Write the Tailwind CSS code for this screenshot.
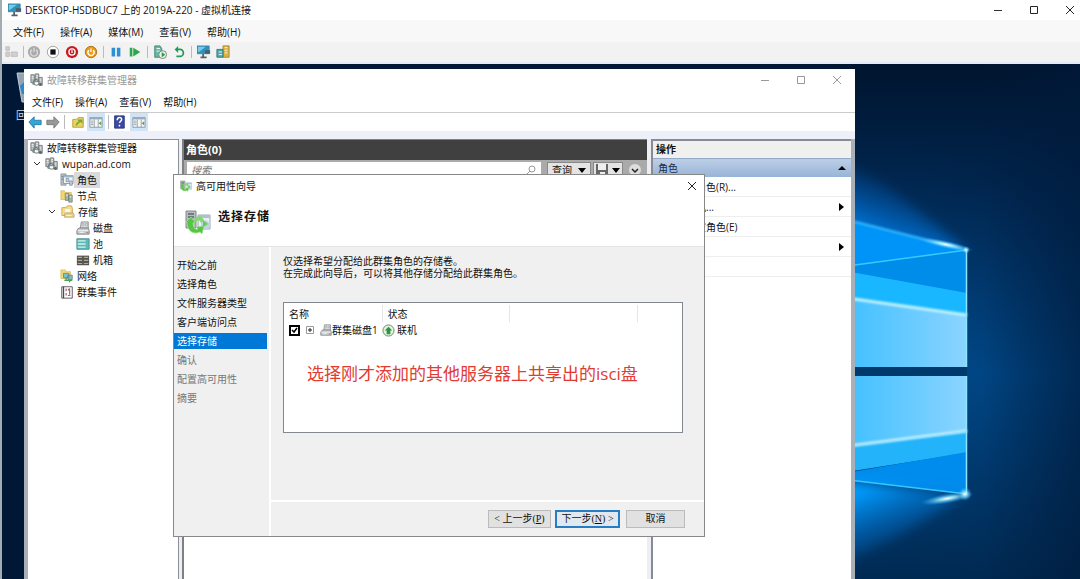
<!DOCTYPE html>
<html lang="zh-CN">
<head>
    <meta charset="utf-8">
    <meta name="viewport" content="width=device-width, initial-scale=1">
    <script src="https://cdn.jsdelivr.net/npm/@tailwindcss/browser@4"></script>
    <title>DESKTOP-HSDBUC7 上的 2019A-220 - 虚拟机连接</title>
</head>
<body class="flex h-screen flex-col overflow-hidden border-l-2 border-[#a3abb3] bg-white font-['Open_Sans','Noto_Sans_CJK_SC',sans-serif] text-[10px] leading-4 text-[#111]">
    <!-- Shared icons -->
    <svg class="hidden">
        <symbol id="cluster" viewBox="0 0 16 16">
            <path d="M1 2h4v9H1zM6 1h4v9H6zM10 5h4v9h-4z" fill="#b4babb" stroke="#737a7c"/>
            <path d="M2 4h2M2 6h2M7 3h2M7 5h2M11 7h2M11 9h2" stroke="#f2f4f4"/>
            <path d="M4 9l3-2 4 3M4 9v4l4 1 3-2" fill="none" stroke="#5c6c6c"/>
            <circle cx="4" cy="12" r="1.5" fill="#7f9190"/><circle cx="12" cy="13" r="1.5" fill="#566"/>
        </symbol>
        <symbol id="disk" viewBox="0 0 16 16">
            <path d="M6 1h8v7H5z" fill="#d8dadb" stroke="#8b8f91"/>
            <path d="M7 3h2v2H7zM11 3h2v2h-2z" fill="#f8f8f8" stroke="#888" stroke-width=".6"/>
            <path d="M3 8h11l1 3v4H1v-4z" fill="#c5c9cb" stroke="#7b8082"/>
            <path d="M2 11h12M4 13h5" stroke="#f8f8f8"/><path d="M12 13h2" stroke="#777"/>
        </symbol>
        <symbol id="wizard" viewBox="0 0 26 26">
            <path d="M1 2h10v17H1z" fill="#b7bcbf" stroke="#84898c"/>
            <path d="M3 5h6M3 8h6M3 11h4" stroke="#5d6468" stroke-width="1.5"/>
            <path d="M13 6h12v14H13z" fill="#e8eff5" stroke="#9aa9b5"/><path d="M13 6h12v3H13z" fill="#b1c0cd"/>
            <path d="M16 14l5-3 3 3v6h-8z" fill="#bcd3e2"/>
            <path d="M2 13c0 9 6 13 13 10l2 2 2-8-8 1 2 2c-3 1-5-1-5-6l2-1-4-5-5 5z" fill="#54c544" stroke="#a0e48e" stroke-width=".7"/>
            <path d="M9 11c4-6 9-4 10 1l-3 2c-1-3-3-4-5-1z" fill="#82da6d"/>
            <path d="M18 11l5 4-5 3z" fill="#6acb55"/>
        </symbol>
        <symbol id="monitor" viewBox="0 0 16 16">
            <path d="M0 1h14v9H0z" fill="#2e92bd" stroke="#3e7690" stroke-width=".7"/><path d="M1 2h9L2 8H1z" fill="#77cbe6"/>
            <path d="M9 6h6v4H9z" fill="#4c5e69"/><path d="M7 10v3M4 14h7" stroke="#54616a" stroke-width="2"/>
        </symbol>
        <symbol id="roles" viewBox="0 0 16 16">
            <path d="M1 1h6v13H1z" fill="#b5bcc3" stroke="#7c858b" stroke-width=".7"/><path d="M2 4h4M2 7h4" stroke="#65737b"/>
            <path d="M4 3h11v9H4z" fill="#f2f7fa" stroke="#8996a0"/><path d="M4 3h11v2H4z" fill="#9fb5c6"/>
            <path d="M7 6h3v4H7zM11 9h3v5h-3z" fill="#c5d1da" stroke="#70899b" stroke-width=".8"/>
        </symbol>
        <symbol id="nodes" viewBox="0 0 16 16">
            <path d="M1 2h4l1 2h7v8H1z" fill="#f3d66e" stroke="#c4a745" stroke-width=".6"/>
            <path d="M6 5h4v8H6zM10 7h4v8h-4z" fill="#a8b5ad" stroke="#637167" stroke-width=".7"/><path d="M7 7h2M11 9h2" stroke="#fff"/>
        </symbol>
        <symbol id="folder" viewBox="0 0 16 16">
            <path d="M1 3h5l1-2h5l1 3v8H1z" fill="#f7df85" stroke="#c9a640"/><path d="M4 4h7v5H4z" fill="#fff7d8" stroke="#d8c58a" stroke-width=".5"/>
            <path d="M5 9h9l1 2v3H4v-3z" fill="#e5cf8b" stroke="#a8976a" stroke-width=".7"/><path d="M6 12h6" stroke="#f7f7f7"/>
        </symbol>
        <symbol id="pool" viewBox="0 0 16 16">
            <path d="M1 2h14v12H1z" fill="#5eb9b8" stroke="#478d91"/><path d="M2 4.500h9M2 8h9M2 11.500h9" stroke="#cff3ee" stroke-width="1.500"/>
        </symbol>
        <symbol id="chassis" viewBox="0 0 16 16">
            <path d="M1 3h14v11H1z" fill="#55544d"/><path d="M2 5h5M9 5h5M2 8.500h5M9 8.500h5M2 12h5M9 12h5" stroke="#aaa99c" stroke-width="1.4"/>
        </symbol>
        <symbol id="network" viewBox="0 0 16 16">
            <path d="M1 1h5l1 2h5v8H1z" fill="#f4d874" stroke="#c4a84c" stroke-width=".6"/>
            <path d="M4 5h6v5H4zM9 7h5v5H9z" fill="#7ac2c8" stroke="#5e747a" stroke-width=".8"/><path d="M5 13h9M7 10v3M11 12v3" stroke="#4e9b56" stroke-width="1.5"/>
        </symbol>
        <symbol id="events" viewBox="0 0 16 16">
            <path d="M2 2h12v13H2z" fill="#fff" stroke="#54464f"/><path d="M4 2v13" stroke="#54464f" stroke-width="1.5"/>
            <path d="M7 4v3m0 2v3M11 4v7M9 6l2-2M9 12h3" stroke="#a36a74" stroke-width="1.4"/>
        </symbol>
        <symbol id="pane" viewBox="0 0 16 16">
            <path d="M1 3h14v11H1z" fill="#f6f8f8" stroke="#88949b"/><path d="M1 3h14v2H1z" fill="#9aabba"/>
            <path d="M6 5v9M2 7h3M2 9h3M2 11h3M10.500 5v9" stroke="#8f9ca3"/><path d="M14 7v5l-3-2.500z" fill="#5ba451"/>
        </symbol>
    </svg>

    <header class="flex h-5 shrink-0 items-center pl-1.5 pr-0.5">
        <svg class="size-[14px]"><use href="#monitor"/></svg>
        <h1 class="ml-[3px]">DESKTOP-HSDBUC7 上的 2019A-220 - 虚拟机连接</h1>
        <div class="ml-auto flex gap-[20px]">
            <button aria-label="最小化" class="flex size-4 items-center justify-center"><svg class="size-2.5" viewBox="0 0 10 10"><path d="M1 5.500h8" stroke="#333"/></svg></button>
            <button aria-label="最大化" class="flex size-4 items-center justify-center"><svg class="size-2.5" viewBox="0 0 10 10"><path d="M1.500 1.500h7v7h-7z" fill="none" stroke="#222"/></svg></button>
            <button aria-label="关闭" class="flex size-4 items-center justify-center"><svg class="size-2.5" viewBox="0 0 10 10"><path d="M1 1l8 8M9 1L1 9" stroke="#222"/></svg></button>
        </div>
    </header>
    <nav class="flex h-[22px] shrink-0 items-center gap-4 bg-[#f8f8f8] pl-[11px] pt-0.5">
        <button>文件(F)</button><button>操作(A)</button><button>媒体(M)</button><button>查看(V)</button><button>帮助(H)</button>
    </nav>
    <div class="flex h-[22px] shrink-0 items-center border-b-2 border-[#e4ebf6] bg-[#f2f2f2] pl-[3px]">
        <button aria-label="Ctrl+Alt+Del" class="mr-1"><svg class="size-[14px]" viewBox="0 0 16 16"><path d="M1 2h4v4H1zM1 8h4v5H1zM7 8h7v5H7z" fill="#d0d0d0" stroke="#bbb"/></svg></button>
        <span class="mr-[3px] h-3 w-px bg-[#bbb]"></span>
        <div class="flex gap-[5px]">
            <button aria-label="启动"><svg class="size-[14px]" viewBox="0 0 16 16"><circle cx="8" cy="8" r="7" fill="#aaa"/><path d="M5.500 5.500a4 4 0 1 0 5 0M8 3v5" fill="none" stroke="#ddd" stroke-width="1.500"/></svg></button>
            <button aria-label="关闭虚拟机"><svg class="size-[14px]" viewBox="0 0 16 16"><circle cx="8" cy="8" r="6.500" fill="#fff" stroke="#999"/><path d="M5 5h6v6H5z" fill="#111"/></svg></button>
            <button aria-label="关机"><svg class="size-[14px]" viewBox="0 0 16 16"><circle cx="8" cy="8" r="7" fill="#c8191f"/><circle cx="8" cy="8" r="3.500" fill="none" stroke="#fff" stroke-width="1.500"/><path d="M8 6v3" stroke="#fff" stroke-width="1.500"/></svg></button>
            <button aria-label="保存"><svg class="size-[14px]" viewBox="0 0 16 16"><circle cx="8" cy="8" r="6.500" fill="#ee9a19" stroke="#a96a13"/><path d="M5.500 6a3.500 3.500 0 1 0 5 0M8 4v4" fill="none" stroke="#fff" stroke-width="1.500"/></svg></button>
        </div>
        <span class="mx-[5px] h-3 w-px bg-[#bbb]"></span>
        <button aria-label="暂停" class="mr-[5px]"><svg class="size-[14px]" viewBox="0 0 16 16"><path d="M3 3h4v10H3zM9 3h4v10H9z" fill="#2f8fd3"/></svg></button>
        <button aria-label="重置"><svg class="size-[14px]" viewBox="0 0 16 16"><path d="M2 3h3v10H2zM6 3l8 5-8 5z" fill="#2ba84b"/></svg></button>
        <span class="mx-[5px] h-3 w-px bg-[#bbb]"></span>
        <button aria-label="检查点" class="mr-[5px]"><svg class="size-[14px]" viewBox="0 0 16 16"><path d="M2 1h6l2 3v10H2z" fill="#69b8a4" stroke="#467e70"/><path d="M4 4h4M4 7h4" stroke="#fff"/><circle cx="11" cy="11" r="4.500" fill="#eee" stroke="#777"/><path d="M10 8l4 3-4 3z" fill="#24a13f"/></svg></button>
        <button aria-label="还原"><svg class="size-[14px]" viewBox="0 0 16 16"><path d="M5 5h4a4 4 0 0 1 0 8H5" fill="none" stroke="#27965a" stroke-width="2"/><path d="M7 1v8L3 5z" fill="#27965a"/></svg></button>
        <span class="mx-[5px] h-3 w-px bg-[#bbb]"></span>
        <button aria-label="增强会话" class="mr-[5px]"><svg class="size-[14px]"><use href="#monitor"/></svg></button>
        <button aria-label="共享"><svg class="size-[14px]" viewBox="0 0 16 16"><path d="M8 1h7v13H8z" fill="#dbb33f" stroke="#a68736"/><path d="M1 5h7v9H1z" fill="#48a9a7" stroke="#387775"/><path d="M3 8h4M3 11h4M10 3h3M10 6h3M10 9h3" stroke="#fff"/></svg></button>
    </div>

    <main class="relative min-h-0 flex-1 overflow-hidden bg-[#001835]">
        <!-- Wallpaper -->
        <svg class="absolute right-0 top-0 h-[515px] w-[240px]" viewBox="840 64 240 515" preserveAspectRatio="none">
            <defs>
                <linearGradient id="sky" x1="0" y1="0" x2="0" y2="1"><stop stop-color="#00152f"/><stop offset=".25" stop-color="#00264f"/><stop offset=".6" stop-color="#00407a"/><stop offset="1" stop-color="#002951"/></linearGradient>
                <radialGradient id="glow" gradientUnits="userSpaceOnUse" cx="870" cy="370" r="240"><stop stop-color="#009dff"/><stop offset=".4" stop-color="#0070cc" stop-opacity=".4"/><stop offset="1" stop-color="#004080" stop-opacity="0"/></radialGradient>
                <linearGradient id="dark" x1="0" y1="0" x2="1" y2="0"><stop offset=".6" stop-color="#001a3a" stop-opacity="0"/><stop offset="1" stop-color="#001a3a" stop-opacity=".6"/></linearGradient>
                <linearGradient id="pane1" x1="0" y1="0" x2="1" y2="0"><stop stop-color="#3dbfff"/><stop offset="1" stop-color="#8bd4ff"/></linearGradient>
                <linearGradient id="beam" gradientUnits="userSpaceOnUse" x1="880" y1="165" x2="850" y2="240"><stop stop-color="#005bb5" stop-opacity="0"/><stop offset="1" stop-color="#008cff"/></linearGradient>
                <linearGradient id="beam2" gradientUnits="userSpaceOnUse" x1="880" y1="570" x2="850" y2="495"><stop stop-color="#005bb5" stop-opacity="0"/><stop offset="1" stop-color="#009cff"/></linearGradient>
                <radialGradient id="flare"><stop stop-color="#fff"/><stop offset=".3" stop-color="#a7f2ff" stop-opacity=".8"/><stop offset="1" stop-color="#2caeff" stop-opacity="0"/></radialGradient>
                <filter id="soft" x="-20%" y="-20%" width="140%" height="140%"><feGaussianBlur stdDeviation="6"/></filter>
                <filter id="softline" x="-20%" y="-50%" width="140%" height="200%"><feGaussianBlur stdDeviation="1"/></filter>
            </defs>
            <path d="M840 64h240v515H840z" fill="url(#sky)"/>
            <path d="M840 64h240v515H840z" fill="url(#glow)" opacity=".35"/>
            <path d="M840 64h240v515H840z" fill="url(#dark)"/>
            <path d="M820 150L885 185L967 250L820 290z" fill="url(#beam)" filter="url(#soft)"/>
            <path d="M840 218L967 250L840 267z" fill="#0094f8"/>
            <path d="M840 218L967 250" stroke="#38bbff" stroke-width="2" filter="url(#softline)"/>
            <path d="M840 267L967 250V300L840 270z" fill="#008ce9"/>
            <path d="M840 270L967 293V367H840z" fill="#19b7ff"/>
            <path d="M840 297L967 315V367H840z" fill="url(#pane1)"/>
            <path d="M840 297L967 315" stroke="#bff1ff" stroke-width="3" filter="url(#softline)"/>
            <path d="M840 267L967 250" stroke="#36cbff" stroke-width="1.500"/>
            <path d="M840 367h127v9H840z" fill="#003a6d"/>
            <path d="M840 376h127v55l-127 16z" fill="url(#pane1)"/>
            <path d="M840 447l127-16v22l-127 20z" fill="#22b3fb"/>
            <path d="M840 474l127-22v42l-127-15z" fill="#008cec"/>
            <path d="M840 447l127-16" stroke="#bff1ff" stroke-width="3" filter="url(#softline)"/>
            <path d="M820 477l147 17L900 535L820 575z" fill="url(#beam2)" filter="url(#soft)"/>
            <path d="M840 479l127 15" stroke="#37c7ff" stroke-width="1.500"/>
            <path d="M966.500 250v117M966.500 376v118" stroke="#8be5ff" stroke-width="1.500"/>
            <ellipse cx="945" cy="249" rx="28" ry="4" transform="rotate(12 967 250)" fill="url(#flare)"/>
            <ellipse cx="947" cy="495" rx="27" ry="5" transform="rotate(-10 967 495)" fill="url(#flare)"/>
            <circle cx="966" cy="250" r="4" fill="url(#flare)"/><circle cx="965" cy="494" r="7" fill="url(#flare)"/>
        </svg>

        <!-- Recycle bin, mostly behind the window -->
        <div class="absolute left-[12px] top-[7px] w-[40px] text-[#ddd]">
            <svg class="h-[32px] w-[32px]" viewBox="0 0 32 32"><path d="M3 2h27l-5 29H8z" fill="#93a3b1" stroke="#c3ccd3"/><path d="M6 15l5-5 3 3v10H8z" fill="#2a88cb"/></svg>
            <span class="mt-1 block whitespace-nowrap pl-[2px]">回收站</span>
        </div>

        <section class="absolute inset-y-0 left-[22px] right-[225px] top-[5px] flex flex-col bg-white">
            <header class="flex h-[22px] shrink-0 items-center pl-1.5 text-[#999]">
                <svg class="size-[14px]"><use href="#cluster"/></svg>
                <h2 class="ml-[3px]">故障转移群集管理器</h2>
                <div class="ml-auto mr-2.5 flex gap-[20px]">
                    <button aria-label="最小化窗口" class="flex size-4 items-center justify-center"><svg class="size-2.5" viewBox="0 0 10 10"><path d="M1 5.500h8" stroke="#999"/></svg></button>
                    <button aria-label="最大化窗口" class="flex size-4 items-center justify-center"><svg class="size-2.5" viewBox="0 0 10 10"><path d="M1.500 1.500h7v7h-7z" fill="none" stroke="#999"/></svg></button>
                    <button aria-label="关闭窗口" class="flex size-4 items-center justify-center"><svg class="size-2.5" viewBox="0 0 10 10"><path d="M1 1l8 8M9 1L1 9" stroke="#999"/></svg></button>
                </div>
            </header>
            <nav class="flex h-[22px] shrink-0 items-center gap-3 border-b border-[#ccc] pl-2">
                <button>文件(F)</button><button>操作(A)</button><button>查看(V)</button><button>帮助(H)</button>
            </nav>
            <div class="flex h-[18px] shrink-0 items-center pl-1">
                <button aria-label="后退" class="mr-1"><svg class="size-[14px]" viewBox="0 0 16 16"><path d="M1 8l6-6v4h8v5H7v4z" fill="#35a6dc" stroke="#277ca7"/></svg></button>
                <button aria-label="前进"><svg class="size-[14px]" viewBox="0 0 16 16"><path d="M15 8L9 2v4H1v5h8v4z" fill="#999" stroke="#777"/></svg></button>
                <span class="mx-1 h-[14px] w-px bg-[#bbb]"></span>
                <button aria-label="上一级" class="mx-0.5"><svg class="size-[14px]" viewBox="0 0 16 16"><path d="M2 5h4l2-2h6v11H2z" fill="#ead262" stroke="#b69b35"/><path d="M5 12c1-3 2-4 4-5l-2-2h6v5l-2-2c-2 1-3 2-4 4z" fill="#6cad3a"/></svg></button>
                <button aria-label="控制台树" class="flex h-[18px] w-[18px] items-center justify-center bg-[#cfe5f7]"><svg class="size-[14px]"><use href="#pane"/></svg></button>
                <span class="mx-[3px] h-[14px] w-px bg-[#bbb]"></span>
                <button aria-label="帮助" class="mr-1"><svg class="size-[14px]" viewBox="0 0 16 16"><path d="M3 1h11v14H3z" fill="#3b4ba4" stroke="#253171"/><path d="M6 6c0-4 5-4 5-1 0 2-2 2-2.500 4M8.500 11v2" fill="none" stroke="#fff" stroke-width="1.700"/></svg></button>
                <button aria-label="操作窗格" class="flex h-[18px] w-[18px] items-center justify-center bg-[#cfe5f7]"><svg class="size-[14px]"><use href="#pane"/></svg></button>
            </div>
            <div class="h-2 shrink-0 bg-[#eef0f9]"></div>

            <div class="flex min-h-0 flex-1 border-l-4 border-r-4 border-[#a9b0b8] bg-[#eceef3]">
                <!-- Console tree -->
                <ul class="w-[151px] shrink-0 border-r border-t border-[#8b8f99] bg-white">
                    <li class="flex h-4 items-center gap-[3px] pl-[2px]"><svg class="size-[14px]"><use href="#cluster"/></svg>故障转移群集管理器</li>
                    <li class="flex h-4 items-center pl-[5px]"><svg class="mr-1 size-2" viewBox="0 0 8 8"><path d="M1 2l3 3 3-3" fill="none" stroke="#333"/></svg><svg class="mr-[3px] size-[14px]"><use href="#cluster"/></svg>wupan.ad.com</li>
                    <li class="flex h-4 items-center pl-8"><svg class="size-[14px]"><use href="#roles"/></svg><span class="bg-[#dadada] px-[3px]">角色</span></li>
                    <li class="flex h-4 items-center gap-[3px] pl-8"><svg class="size-[14px]"><use href="#nodes"/></svg>节点</li>
                    <li class="flex h-4 items-center pl-5"><svg class="mr-[5px] size-2" viewBox="0 0 8 8"><path d="M1 2l3 3 3-3" fill="none" stroke="#333"/></svg><svg class="mr-[3px] size-[14px]"><use href="#folder"/></svg>存储</li>
                    <li class="flex h-4 items-center gap-[3px] pl-[48px]"><svg class="size-[14px]"><use href="#disk"/></svg>磁盘</li>
                    <li class="flex h-4 items-center gap-[3px] pl-[48px]"><svg class="size-[14px]"><use href="#pool"/></svg>池</li>
                    <li class="flex h-4 items-center gap-[3px] pl-[48px]"><svg class="size-[14px]"><use href="#chassis"/></svg>机箱</li>
                    <li class="flex h-4 items-center gap-[3px] pl-8"><svg class="size-[14px]"><use href="#network"/></svg>网络</li>
                    <li class="flex h-4 items-center gap-[3px] pl-8"><svg class="size-[14px]"><use href="#events"/></svg>群集事件</li>
                </ul>

                <section class="ml-[3px] flex min-w-0 flex-1 flex-col border-l-2 border-t border-[#808080] bg-white">
                    <h3 class="h-5 shrink-0 bg-[#404040] pl-0.5 text-[11px] leading-5 font-bold text-white">角色(0)</h3>
                    <div class="flex h-[22px] shrink-0 items-start bg-[#aaaaaa] pl-[3px] pt-0.5">
                        <div class="flex h-[18px] min-w-0 flex-1 items-start bg-white pr-1">
                            <input aria-label="搜索" placeholder="搜索" class="h-4 min-w-0 flex-1 px-1 italic outline-none placeholder:text-[#777]">
                            <svg class="mt-0.5 size-3" viewBox="0 0 12 12"><circle cx="7" cy="5" r="3" fill="none" stroke="#999"/><path d="M5 7l-4 4" stroke="#999"/></svg>
                        </div>
                        <button class="ml-1.5 flex h-4 items-center gap-1.5 border border-[#888] bg-[#e4e4e4] px-1 leading-3">查询<svg class="h-[5px] w-2" viewBox="0 0 8 5"><path d="M0 0h8L4 5z"/></svg></button>
                        <button aria-label="保存查询" class="ml-0.5 flex h-4 items-center gap-1 border border-[#888] bg-[#e4e4e4] px-0.5"><svg class="size-3" viewBox="0 0 12 12"><path d="M0 0h12v12H0z" fill="#666"/><path d="M2 0h8v6H2zM4 8h5v4H4z" fill="#eee"/></svg><svg class="h-[5px] w-2" viewBox="0 0 8 5"><path d="M0 0h8L4 5z"/></svg></button>
                        <button aria-label="展开" class="mx-1.5 mt-0.5"><svg class="size-3" viewBox="0 0 12 12"><circle cx="6" cy="6" r="6" fill="#ddd"/><path d="M3 5l3 3 3-3" fill="none" stroke="#222" stroke-width="1.500"/></svg></button>
                    </div>
                </section>

                <!-- Actions pane -->
                <aside class="ml-1 w-[200px] shrink-0 border-l-2 border-t-2 border-[#888a96] bg-white">
                    <h3 class="h-[17px] bg-[#f0f0ee] pl-[3px] font-bold">操作</h3>
                    <button class="flex h-[19px] w-full items-center justify-between border-t border-[#91aac7] bg-linear-to-b from-[#bccfe7] to-[#98b4d6] px-[5px] text-[#14304f]">角色<svg class="h-1 w-2" viewBox="0 0 8 4"><path d="M0 4h8L4 0z" fill="#000"/></svg></button>
                    <button class="flex h-5 w-full items-center border-b border-[#eee] pl-[23px]">配置角色(R)...</button>
                    <button class="flex h-5 w-full items-center justify-between border-b border-[#eee] pl-[23px] pr-[7px]">虚拟机...<svg class="h-2 w-[5px]" viewBox="0 0 5 8"><path d="M0 0v8l5-4z"/></svg></button>
                    <button class="flex h-5 w-full items-center border-b border-[#eee] pl-[23px]">创建空角色(E)</button>
                    <button class="flex h-5 w-full items-center justify-between border-b border-[#eee] pl-[23px] pr-[7px]">查看<svg class="h-2 w-[5px]" viewBox="0 0 5 8"><path d="M0 0v8l5-4z"/></svg></button>
                    <button class="flex h-5 w-full items-center border-b border-[#eee] pl-[23px]">刷新</button>
                </aside>
            </div>
        </section>

        <!-- High availability wizard -->
        <section role="dialog" aria-labelledby="wizardTitle" class="absolute left-[171px] top-[110px] flex h-[363px] w-[532px] flex-col border border-[#888] bg-[#f0f0f0]">
            <header class="h-[72px] shrink-0 border-b border-[#e4e4e4] bg-white">
                <div class="flex h-[22px] items-center pl-1.5 pr-1">
                    <svg class="size-3"><use href="#wizard"/></svg>
                    <h2 id="wizardTitle" class="ml-1">高可用性向导</h2>
                    <button aria-label="关闭向导" class="ml-auto flex size-4 items-center justify-center"><svg class="size-2.5" viewBox="0 0 10 10"><path d="M1 1l8 8M9 1L1 9" stroke="#222"/></svg></button>
                </div>
                <div class="flex pl-[11px]">
                    <svg class="mt-3 size-[26px]"><use href="#wizard"/></svg>
                    <h3 class="ml-[7px] mt-3 text-[12px] leading-4 font-bold tracking-[1px]">选择存储</h3>
                </div>
            </header>
            <div class="flex min-h-0 flex-1">
                <ol class="w-[97px] shrink-0 border-r-2 border-white pt-2.5">
                    <li class="mr-0.5 mb-[3px] pl-[3px]">开始之前</li>
                    <li class="mr-0.5 mb-[3px] pl-[3px]">选择角色</li>
                    <li class="mr-0.5 mb-[3px] pl-[3px]">文件服务器类型</li>
                    <li class="mr-0.5 mb-[3px] pl-[3px]">客户端访问点</li>
                    <li aria-current="step" class="mr-0.5 mb-[3px] bg-[#0078d7] pl-[3px] text-white">选择存储</li>
                    <li class="mr-0.5 mb-[3px] pl-[3px] text-[#777]">确认</li>
                    <li class="mr-0.5 mb-[3px] pl-[3px] text-[#777]">配置高可用性</li>
                    <li class="mr-0.5 mb-[3px] pl-[3px] text-[#777]">摘要</li>
                </ol>
                <div class="flex min-w-0 flex-1 flex-col">
                    <div class="flex-1 pl-3 pr-[21px] pt-2">
                        <p class="leading-3">仅选择希望分配给此群集角色的存储卷。<br>在完成此向导后，可以将其他存储分配给此群集角色。</p>
                        <div class="mt-[23px] h-[131px] border border-[#828790] bg-white pt-0.5">
                            <table class="w-full table-fixed text-left">
                                <thead><tr class="h-[17px]"><th class="w-[98px] border-r border-[#e5e5e5] p-0 pl-[5px] font-normal">名称</th><th class="w-[127px] border-r border-[#e5e5e5] p-0 pl-[5px] font-normal">状态</th><th class="w-[128px] border-r border-[#e5e5e5] p-0"></th><th></th></tr></thead>
                                <tbody><tr class="h-4">
                                    <td class="p-0"><div class="flex items-center pl-[5px]">
                                        <span class="relative flex size-[11px] shrink-0">
                                            <input type="checkbox" id="disk1" checked class="peer size-[11px] appearance-none border-2 border-black bg-white">
                                            <svg class="pointer-events-none absolute inset-0 hidden peer-checked:block" viewBox="0 0 11 11"><path d="M3 5l2 2 3-4" fill="none" stroke="#000" stroke-width="1.500"/></svg>
                                        </span>
                                        <svg class="mx-1.5 size-2 shrink-0" viewBox="0 0 8 8"><path d="M.5.5h7v7h-7z" fill="#fff" stroke="#999"/><path d="M2 4h4M4 2v4" stroke="#222"/></svg>
                                        <svg class="size-3 shrink-0"><use href="#disk"/></svg><label for="disk1" class="whitespace-nowrap">群集磁盘1</label>
                                    </div></td>
                                    <td class="p-0"><span class="flex items-center gap-[2px]"><svg class="size-[13px]" viewBox="0 0 14 14"><circle cx="7" cy="7" r="6" fill="#e4f2e2" stroke="#5a8d5a"/><path d="M7 3l4 4H9v4H5V7H3z" fill="#2d9440"/></svg>联机</span></td><td></td><td></td>
                                </tr></tbody>
                            </table>
                            <p class="mt-6 pl-[23px] text-[17px] leading-6 text-[#e23b32]">选择刚才添加的其他服务器上共享出的isci盘</p>
                        </div>
                    </div>
                    <footer class="flex h-[36px] items-center justify-end border-t-2 border-white pr-[19px] font-['Liberation_Serif','Noto_Sans_CJK_SC',serif]">
                        <button class="h-[18px] w-[63px] border border-[#bbb] bg-[#e1e1e1]">&lt; 上一步(<u>P</u>)</button>
                        <button class="ml-1 h-[18px] w-[65px] border-2 border-[#247dc5] bg-[#e1e8ef] leading-[14px]">下一步(<u>N</u>) &gt;</button>
                        <button class="ml-1.5 h-[18px] w-[59px] border border-[#bbb] bg-[#e1e1e1]">取消</button>
                    </footer>
                </div>
            </div>
        </section>
    </main>
</body>
</html>
